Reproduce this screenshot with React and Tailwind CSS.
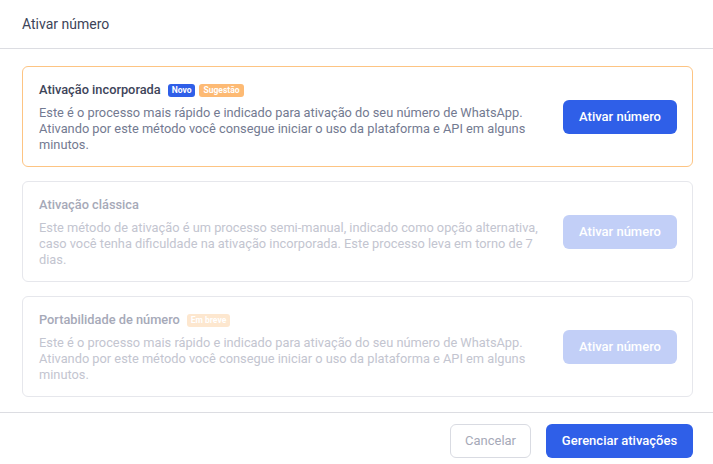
import React from "react";

const OPTIONS = [
  {
    title: "Ativação incorporada",
    text: "Este é o processo mais rápido e indicado para ativação do seu número de WhatsApp. Ativando por este método você consegue iniciar o uso da plataforma e API em alguns minutos.",
    badges: [
      { label: "Novo", cls: "bg-[#2f5fe8] text-white" },
      { label: "Sugestão", cls: "bg-[#fdba74] text-white" },
    ],
    active: true,
  },
  {
    title: "Ativação clássica",
    text: "Este método de ativação é um processo semi-manual, indicado como opção alternativa, caso você tenha dificuldade na ativação incorporada. Este processo leva em torno de 7 dias.",
    badges: [],
    active: false,
  },
  {
    title: "Portabilidade de número",
    text: "Este é o processo mais rápido e indicado para ativação do seu número de WhatsApp. Ativando por este método você consegue iniciar o uso da plataforma e API em alguns minutos.",
    badges: [{ label: "Em breve", cls: "bg-[#fde7cf] text-white" }],
    active: false,
  },
];

const OptionCard = ({ title, text, badges, active }) => (
  <div
    className={`flex items-center gap-5 rounded-md border bg-white pl-4 pr-[15px] pt-[14px] pb-[13px] ${
      active ? "border-[#fdc483]" : "border-[#e6e7ec]"
    }`}
  >
    <div className="flex-1">
      <div className="flex h-[18px] items-center gap-[4px]">
        <p
          className={`mr-[3px] text-[12.8px] font-medium ${
            active ? "text-[#3d4459]" : "text-[#a6a9b8]"
          }`}
        >
          {title}
        </p>
        {badges.map((b) => (
          <span
            key={b.label}
            className={`rounded-[3px] px-[4px] py-[1px] text-[8.5px] font-bold leading-[11px] ${b.cls}`}
          >
            {b.label}
          </span>
        ))}
      </div>
      <p
        className={`mt-[6px] text-[12.8px] leading-4 ${
          active ? "text-[#737a91]" : "text-[#c3c5d0]"
        }`}
      >
        {text}
      </p>
    </div>
    <button
      className={`h-[34px] w-[114px] shrink-0 rounded-md text-[13px] font-medium text-white ${
        active ? "bg-[#2f5fe8]" : "bg-[#c2cff7]"
      }`}
    >
      Ativar número
    </button>
  </div>
);

export default function App() {
  return (
    <div className="h-[464px] w-[713px] bg-white font-['Roboto',sans-serif]">
      <div className="flex h-[49px] items-center border-b border-[#dcdde2] px-[22px]">
        <h1 className="text-[14px] font-normal text-[#3d4459]">Ativar número</h1>
      </div>
      <div className="flex flex-col gap-[14px] pl-[22px] pr-[20px] pt-[17px] pb-[15px]">
        {OPTIONS.map((o) => (
          <OptionCard key={o.title} {...o} />
        ))}
      </div>
      <div className="flex justify-end gap-[15px] border-t border-[#dcdde2] px-[20px] pt-[11px]">
        <button className="h-[34px] w-[81px] rounded-md border border-[#d9dbe2] text-[13px] text-[#a6a9b8]">
          Cancelar
        </button>
        <button className="h-[34px] w-[147px] rounded-md bg-[#2f5fe8] text-[13px] font-medium text-white">
          Gerenciar ativações
        </button>
      </div>
    </div>
  );
}
